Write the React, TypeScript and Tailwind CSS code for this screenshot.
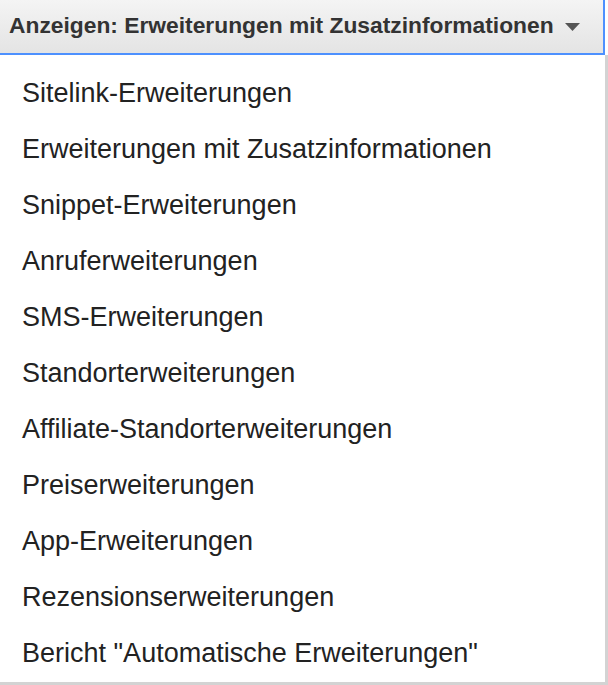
const items = [
  "Sitelink-Erweiterungen",
  "Erweiterungen mit Zusatzinformationen",
  "Snippet-Erweiterungen",
  "Anruferweiterungen",
  "SMS-Erweiterungen",
  "Standorterweiterungen",
  "Affiliate-Standorterweiterungen",
  "Preiserweiterungen",
  "App-Erweiterungen",
  "Rezensionserweiterungen",
  'Bericht "Automatische Erweiterungen"',
];

export default function App() {
  return (
    <div className="h-[685px] w-[608px] bg-white font-['Liberation_Sans',Arial,sans-serif] text-[#222]">
      <button className="flex h-[55px] w-[605px] items-center border-r-2 border-b-2 border-[#4d90fe] bg-gradient-to-b from-[#f4f4f4] to-[#e4e4e4] pb-[2px] pl-[9px] text-[22.8px] font-bold text-[#333]">
        Anzeigen: Erweiterungen mit Zusatzinformationen
        <svg className="ml-[11px] mt-[2px]" width="15" height="8" viewBox="0 0 15 8">
          <path d="M0 0h15L7.5 8z" fill="#555" />
        </svg>
      </button>
      <ul className="h-[630px] w-[608px] border-r-[3px] border-b-[3px] border-[#d3d3d3] pt-[10px]">
        {items.map((item) => (
          <li key={item} className="flex h-[56px] items-center pl-[22px] text-[27px]">
            {item}
          </li>
        ))}
      </ul>
    </div>
  );
}
